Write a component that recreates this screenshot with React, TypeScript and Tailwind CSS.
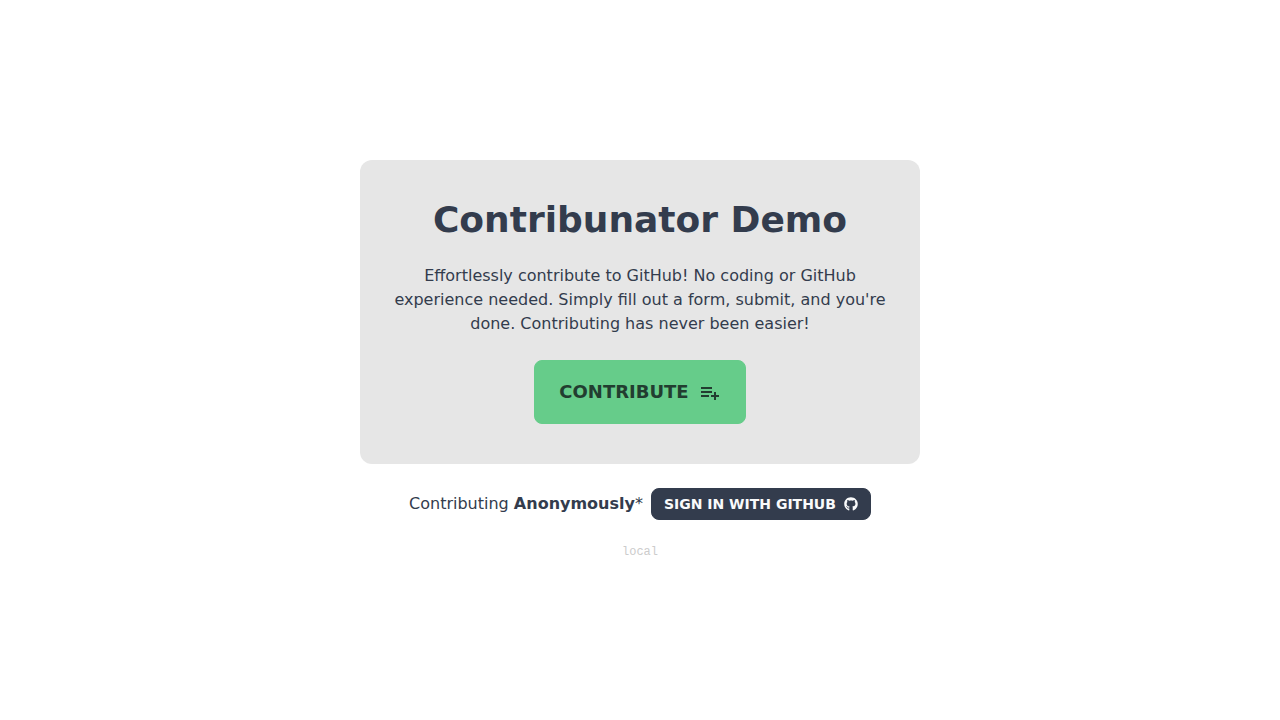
import { BiListPlus } from "react-icons/bi";
import { FaGithub } from "react-icons/fa";

export default function App() {
  return (
    <main className="flex min-h-screen flex-col items-center justify-center bg-white p-4 font-['DejaVu_Sans',sans-serif] text-base text-[#333c4d]">
      <section className="flex w-full max-w-[560px] flex-col items-center rounded-xl bg-[#e6e6e6] px-8 py-10 text-center">
        <h1 className="text-4xl font-bold">Contribunator Demo</h1>
        <p className="my-6">
          Effortlessly contribute to GitHub! No coding or GitHub experience needed. Simply fill out a form, submit, and you're done. Contributing has never been easier!
        </p>
        <button type="button" className="flex h-16 items-center gap-2 rounded-lg border border-[#66cc8a] bg-[#66cc8a] px-6 text-lg font-semibold text-[#223d30]">
          CONTRIBUTE
          <BiListPlus className="size-6" aria-hidden="true" />
        </button>
      </section>
      <div className="mt-6 flex items-center gap-2">
        <p>
          Contributing <strong>Anonymously</strong>*
        </p>
        <button type="button" className="flex h-8 items-center gap-2 rounded-lg border border-[#333c4d] bg-[#333c4d] px-3 text-sm font-semibold text-[#f9fafb]">
          SIGN IN WITH GITHUB
          <FaGithub className="size-3.5" aria-hidden="true" />
        </button>
      </div>
      <p className="mt-6 font-['Liberation_Mono',monospace] text-xs text-[#cccccc]">local</p>
    </main>
  );
}
